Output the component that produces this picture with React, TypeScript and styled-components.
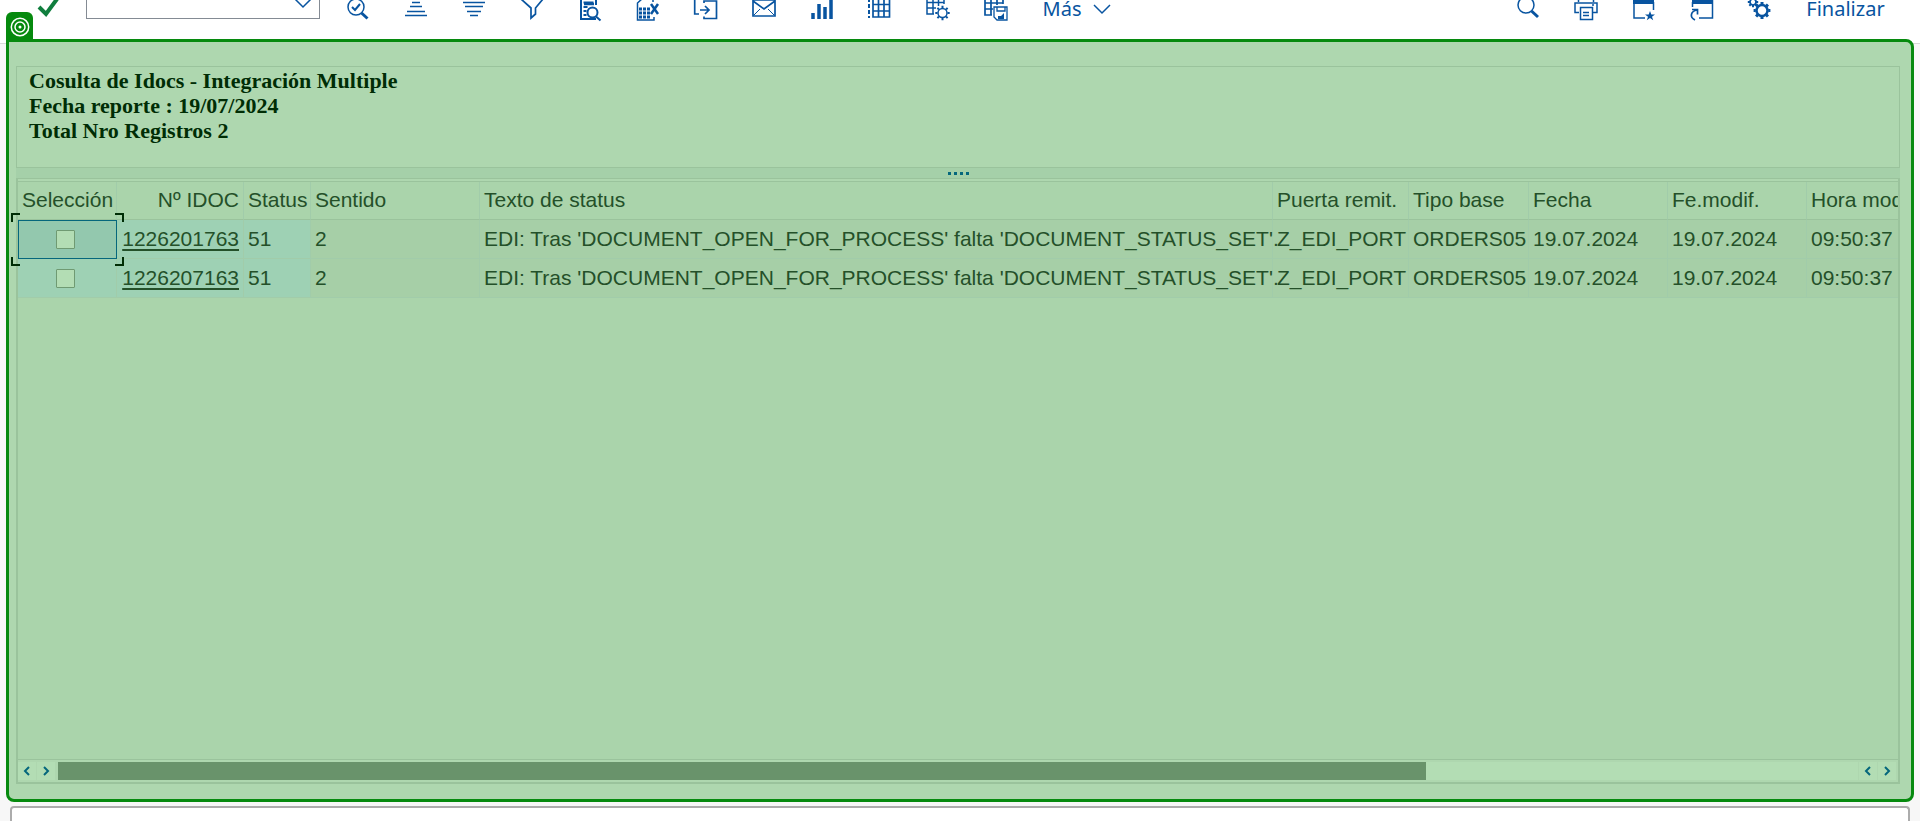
import React from "react";
import styled, { createGlobalStyle } from "styled-components";

const GlobalStyle = createGlobalStyle`
  *, *::before, *::after { box-sizing: border-box; }
  body { margin: 0; background: #f7f7f7; }
`;

const color = {
  blue: "#0854a0",
  frame: "#068a0e",
  pane: "#aed7af",
  grid: "#aad4ab",
  row: "#a6cfa7",
  keyCell: "#9ed1b4",
  selected: "#93c8ae",
  line: "#9ac39c",
  softLine: "#a1ccaa",
  text: "#245029",
  teal: "#05677c",
  track: "#b3ddb4",
  thumb: "#69936b",
};

const Page = styled.div`
  display: flex;
  flex-direction: column;
  height: 100vh;
  overflow: hidden;
  font-family: "Liberation Sans", Arial, sans-serif;
`;

const Toolbar = styled.header`
  display: flex;
  flex: none;
  align-items: flex-end;
  height: 44px;
  padding: 0 18px 16px 29px;
  overflow: hidden;
  background: #fff;
  border-bottom: 1px solid #d9d9d9;
`;

const ToolButton = styled.button<{ $width?: number }>`
  display: flex;
  flex: none;
  align-items: center;
  justify-content: center;
  gap: 12px;
  width: ${(p) => (p.$width ? `${p.$width}px` : "auto")};
  height: 36px;
  padding: 0;
  border: 0;
  background: none;
  color: ${color.blue};
  font: 20px/24px "Noto Sans", sans-serif;
`;

const Combo = styled.div`
  display: flex;
  flex: none;
  align-items: center;
  width: 234px;
  height: 32px;
  margin: 0 9px 8px 19px;
  border: 1px solid #848b94;
  background: #fff;
`;

const ComboInput = styled.input`
  flex: 1;
  min-width: 0;
  height: 30px;
  padding: 0 8px;
  border: 0;
  outline: 0;
  background: none;
  font: 20px "Noto Sans", sans-serif;
`;

const Spacer = styled.div`
  flex: 1;
`;

const Icon = styled.svg`
  display: block;
  flex: none;
  overflow: visible;
  fill: none;
  stroke: currentColor;
`;

const Frame = styled.main`
  position: relative;
  display: flex;
  flex: 1;
  flex-direction: column;
  min-height: 0;
  margin: -5px 6px 4px;
  padding: 24px 11px 15px 7px;
  border: 3px solid ${color.frame};
  border-radius: 0 8px 8px 8px;
  background: ${color.pane};
`;

const FrameTab = styled.div`
  position: absolute;
  left: -3px;
  bottom: 100%;
  display: grid;
  place-items: center;
  width: 27px;
  height: 30px;
  border-radius: 6px 6px 0 0;
  background: ${color.frame};
  color: #fff;
`;

const Heading = styled.section`
  flex: none;
  height: 102px;
  padding: 1px 12px;
  border: 1px solid ${color.line};
  color: #002d05;
  font: bold 22px/25px "Liberation Serif", "Times New Roman", serif;
`;

const HeadingLine = styled.p`
  margin: 0;
`;

const Splitter = styled.div`
  display: flex;
  flex: none;
  align-items: center;
  justify-content: center;
  gap: 3px;
  height: 10px;
  background: #a5d0a9;
`;

const Dot = styled.span`
  width: 3px;
  height: 3px;
  background: ${color.teal};
`;

const GridPanel = styled.section`
  position: relative;
  display: flex;
  flex: 1;
  flex-direction: column;
  min-height: 0;
  padding-top: 2px;
  border: 2px solid ${color.line};
  border-top-width: 1px;
`;

const GridView = styled.div`
  flex: 1;
  min-height: 0;
  overflow: hidden;
  border-top: 1px solid ${color.line};
  border-bottom: 1px solid ${color.line};
  background: ${color.grid};
`;

const Table = styled.table`
  width: 1930px;
  table-layout: fixed;
  border-collapse: separate;
  border-spacing: 0;
  color: ${color.text};
  font-size: 21px;
  line-height: 24px;
  white-space: nowrap;
`;

const HeadCell = styled.th<{ $align?: string }>`
  height: 38px;
  padding: 0 4px 2px;
  overflow: hidden;
  border-right: 1px solid ${color.softLine};
  border-bottom: 1px solid ${color.line};
  font-weight: normal;
  text-align: ${(p) => p.$align || "left"};
`;

const Cell = styled.td<{ $tone?: "key" | "selected"; $align?: string }>`
  height: 39px;
  padding: 0 4px;
  border: 0 solid ${color.softLine};
  border-width: 0 1px 1px 0;
  background: ${(p) =>
    p.$tone === "selected" ? color.selected : p.$tone === "key" ? color.keyCell : color.row};
  outline: ${(p) => (p.$tone === "selected" ? `1px solid ${color.teal}` : "0")};
  outline-offset: -1px;
  text-align: ${(p) => p.$align || "left"};
`;

const Check = styled.input`
  display: block;
  appearance: none;
  width: 19px;
  height: 19px;
  margin: 0 34px;
  border: 1px solid #6f9a72;
  border-radius: 1px;
  background: ${color.track};
`;

const IdocLink = styled.a`
  color: inherit;
  text-decoration: underline;
  text-decoration-thickness: 2px;
  text-underline-offset: 3px;
`;

const CellCursor = styled.svg`
  position: absolute;
  top: 34px;
  left: -7px;
  fill: none;
  stroke: #002d05;
  stroke-width: 2;
  pointer-events: none;
`;

const ScrollBar = styled.div`
  display: flex;
  flex: none;
  gap: 1px;
  height: 22px;
  padding: 2px 2px 2px 0;
  background: ${color.pane};
`;

const ScrollButton = styled.button`
  display: grid;
  place-items: center;
  width: 18px;
  height: 18px;
  padding: 0;
  border: 0;
  background: ${color.track};
  color: ${color.teal};
`;

const ScrollTrack = styled.div`
  flex: 1;
  margin-left: 2px;
  background: ${color.track};
`;

const ScrollThumb = styled.div`
  width: 76%;
  height: 18px;
  background: ${color.thumb};
`;

const NextPanel = styled.footer`
  flex: none;
  height: 15px;
  margin: 0 10px;
  border: 2px solid #acacac;
  border-bottom: 0;
  border-radius: 4px 4px 0 0;
  background: #fff;
`;

const gear = (cx: number, cy: number, r: number, teeth: number) =>
  Array.from({ length: teeth }, (_, i) => {
    const a = (i * 2 * Math.PI) / teeth;
    const p = (d: number) => `${(cx + Math.cos(a) * d).toFixed(2)} ${(cy + Math.sin(a) * d).toFixed(2)}`;
    return `M${p(r)}L${p(r + 2.2)}`;
  }).join("");

const toolIcons: Record<string, React.ReactNode> = {
  Detalles: (
    <>
      <circle cx="10" cy="10" r="8" strokeWidth="1.5" />
      <path d="M6 10l3 3 5-6" strokeWidth="2" />
      <path d="M15.5 16l6 5.5" strokeWidth="3" />
    </>
  ),
  "Orden ascendente": <path d="M10.5 1.5h3M8 5.5h8M6 9.5h12M3 14.5h18M1 18.5h22" strokeWidth="1.3" />,
  "Orden descendente": <path d="M-1 1.5h26M1 5.5h22M3 9.5h18M5 14.5h14M8 18.5h8" strokeWidth="1.3" />,
  Filtro: <path d="M1 1h22v1l-7.5 9v6l-4.5 4V11L1 2z" strokeWidth="1.7" />,
  "Vista preliminar": (
    <>
      <path d="M18 8V1H3v21h15M5.5 5.5h10M5.5 10h4M5.5 14h3M5.5 18h3" strokeWidth="2" />
      <path d="M6 7h10" strokeWidth="2.5" />
      <circle cx="14.5" cy="15.5" r="5" strokeWidth="2" />
      <path d="M18 19.5l4.5 4" strokeWidth="2" />
    </>
  ),
  "Hoja de cálculo": (
    <>
      <path d="M17 5V1H7L1.500 6v17H18v-3" strokeWidth="1.5" />
      <path d="M3 12h11M3 16h11M3 20h11" strokeWidth="3" strokeDasharray="3 1" />
      <path d="M15 7l7 10M22 7l-7 10" strokeWidth="2.5" />
    </>
  ),
  Exportar: (
    <path d="M5 17H.7V1H7M10 6V4h12.5v17.5H10v-2M6 13h9M11 9l4 4-4 4" strokeWidth="1.7" />
  ),
  Correo: (
    <>
      <path d="M1 3h22v16H1zM1 4l11 8 11-8" strokeWidth="1.7" />
      <path d="M2 18l6-6M22 18l-6-6" />
    </>
  ),
  Gráfico: <path d="M3 22v-6M9 22V7M15 22V10M21 22V0" strokeWidth="3.5" />,
  "Seleccionar disposición": (
    <>
      <path d="M1 1v20" strokeWidth="2" strokeDasharray="4 2" />
      <path d="M5 1h16.500v19H5zM5 7.500h16M5 14h16M10.500 1v19M16 1v19" strokeWidth="1.7" />
    </>
  ),
  "Modificar disposición": (
    <>
      <path d="M8 17H1V0h17v7M1 5.500h17M1 11h9M7 0v17M12.500 0v9" strokeWidth="1.5" />
      <circle cx="16.5" cy="16" r="4.5" strokeWidth="1.5" />
      <path d={gear(16.5, 16, 5, 8)} strokeWidth="2" />
    </>
  ),
  "Grabar disposición": (
    <>
      <path d="M8 18H1V0h18v7M1 6h18M1 12h8M7 0v18M13 0v8" strokeWidth="1.7" />
      <path d="M10 10h13v13H13l-3-3zM13 10v4h8v-4" strokeWidth="1.3" />
      <path d="M14 22v-3h3l3-3v6z" fill="currentColor" stroke="none" />
    </>
  ),
};

const systemIcons: Record<string, React.ReactNode> = {
  Buscar: (
    <>
      <circle cx="10" cy="8" r="8" strokeWidth="1.5" />
      <path d="M15.5 14l6.5 6" strokeWidth="3" />
    </>
  ),
  Imprimir: (
    <path
      d="M4.500 5V0h15v5M5 15.500H1V6h22v9.500h-4M6.500 10.500h12v12h-12zM9 15.500h6M9 18.500h6M18 8h2"
      strokeWidth="1.5"
    />
  ),
  "Nueva ventana": (
    <>
      <path d="M2 1v20h11M21.500 5v8" strokeWidth="1.5" />
      <path d="M1 5h21" strokeWidth="4" />
      <path
        d="M18 14l1.300 3.500H23l-3 2.200 1.200 3.600L18 21l-3.200 2.300 1.200-3.600-3-2.200h3.700z"
        fill="currentColor"
        stroke="none"
      />
    </>
  ),
  "Crear acceso directo": (
    <>
      <path d="M2.500 5v5M22.500 1v20H9" strokeWidth="1.5" />
      <path d="M2 5h21" strokeWidth="4" />
      <path d="M5 23c-6-3-4-9 2-10M2 12.500h5.500v5" strokeWidth="1.7" />
    </>
  ),
  Opciones: (
    <>
      <circle cx="5" cy="5" r="3" strokeWidth="1.7" />
      <path d={gear(5, 5, 3, 8)} strokeWidth="2" />
      <circle cx="14" cy="13.5" r="5.5" strokeWidth="2.5" />
      <path d={gear(14, 13.5, 6.2, 8)} strokeWidth="3" />
    </>
  ),
};

const ToolIcon = ({ children }: { children: React.ReactNode }) => (
  <Icon width="24" height="24" viewBox="0 0 24 24" aria-hidden="true">
    {children}
  </Icon>
);

const ChevronDown = () => (
  <Icon width="18" height="10" viewBox="0 0 18 10" aria-hidden="true">
    <path d="M1 1l8 8 8-8" strokeWidth="1.5" />
  </Icon>
);

const Arrow = ({ left }: { left?: boolean }) => (
  <Icon width="8" height="10" viewBox="0 0 8 10" aria-hidden="true">
    <path d={left ? "M6 1L2 5l4 4" : "M2 1l4 4-4 4"} strokeWidth="2" />
  </Icon>
);

const ScrollArrows = () => (
  <>
    <ScrollButton aria-label="Desplazar a la izquierda">
      <Arrow left />
    </ScrollButton>
    <ScrollButton aria-label="Desplazar a la derecha">
      <Arrow />
    </ScrollButton>
  </>
);

const columns = [
  { title: "Selección", width: 99 },
  { title: "Nº IDOC", width: 127, align: "right" },
  { title: "Status", width: 67 },
  { title: "Sentido", width: 169 },
  { title: "Texto de status", width: 793 },
  { title: "Puerta remit.", width: 136 },
  { title: "Tipo base", width: 120 },
  { title: "Fecha", width: 139 },
  { title: "Fe.modif.", width: 139 },
  { title: "Hora modif.", width: 141 },
];

const statusText = "EDI: Tras 'DOCUMENT_OPEN_FOR_PROCESS' falta 'DOCUMENT_STATUS_SET'.";
const records = ["1226201763", "1226207163"].map((idoc) => ({
  idoc,
  status: "51",
  rest: ["2", statusText, "Z_EDI_PORT", "ORDERS05", "19.07.2024", "19.07.2024", "09:50:37"],
}));

export default function App() {
  return (
    <Page>
      <GlobalStyle />
      <Toolbar>
        <ToolButton $width={38} aria-label="Aceptar">
          <Icon width="20" height="20" viewBox="0 0 20 20" aria-hidden="true">
            <path d="M1 8l7 7L19 0" stroke="#107e3e" strokeWidth="4" />
          </Icon>
        </ToolButton>
        <Combo>
          <ComboInput aria-label="Código de transacción" />
          <ToolButton $width={32} aria-label="Abrir lista">
            <ChevronDown />
          </ToolButton>
        </Combo>
        {Object.entries(toolIcons).map(([name, icon]) => (
          <ToolButton key={name} $width={58} aria-label={name}>
            <ToolIcon>{icon}</ToolIcon>
          </ToolButton>
        ))}
        <ToolButton $width={104}>
          Más
          <ChevronDown />
        </ToolButton>
        <Spacer />
        {Object.entries(systemIcons).map(([name, icon]) => (
          <ToolButton key={name} $width={58} aria-label={name}>
            <ToolIcon>{icon}</ToolIcon>
          </ToolButton>
        ))}
        <ToolButton $width={113}>Finalizar</ToolButton>
      </Toolbar>

      <Frame>
        <FrameTab>
          <Icon width="20" height="20" viewBox="0 0 20 20" aria-hidden="true">
            <circle cx="10" cy="10" r="8.7" strokeWidth="1.5" />
            <circle cx="10" cy="10" r="5" strokeWidth="1.5" />
            <circle cx="10" cy="10" r="1.5" fill="currentColor" stroke="none" />
          </Icon>
        </FrameTab>
        <Heading>
          <HeadingLine>Cosulta de Idocs - Integración Multiple</HeadingLine>
          <HeadingLine>Fecha reporte : 19/07/2024</HeadingLine>
          <HeadingLine>Total Nro Registros 2</HeadingLine>
        </Heading>
        <Splitter>
          <Dot />
          <Dot />
          <Dot />
          <Dot />
        </Splitter>
        <GridPanel>
          <GridView>
            <Table>
              <colgroup>
                {columns.map((c) => (
                  <col key={c.title} width={c.width} />
                ))}
              </colgroup>
              <thead>
                <tr>
                  {columns.map((c) => (
                    <HeadCell key={c.title} scope="col" $align={c.align}>
                      {c.title}
                    </HeadCell>
                  ))}
                </tr>
              </thead>
              <tbody>
                {records.map((r, i) => (
                  <tr key={r.idoc}>
                    <Cell $tone={i === 0 ? "selected" : "key"}>
                      <Check type="checkbox" aria-label={`Seleccionar ${r.idoc}`} />
                    </Cell>
                    <Cell $tone="key" $align="right">
                      <IdocLink href="#idoc">{r.idoc}</IdocLink>
                    </Cell>
                    <Cell $tone="key">{r.status}</Cell>
                    {r.rest.map((value, j) => (
                      <Cell key={j}>{value}</Cell>
                    ))}
                  </tr>
                ))}
              </tbody>
            </Table>
          </GridView>
          <CellCursor width="113" height="53" viewBox="0 0 113 53" aria-hidden="true">
            <path d="M1 9V1h8M104 1h8v8M112 44v8h-8M9 52H1v-8" />
          </CellCursor>
          <ScrollBar>
            <ScrollArrows />
            <ScrollTrack>
              <ScrollThumb />
            </ScrollTrack>
            <ScrollArrows />
          </ScrollBar>
        </GridPanel>
      </Frame>
      <NextPanel />
    </Page>
  );
}
